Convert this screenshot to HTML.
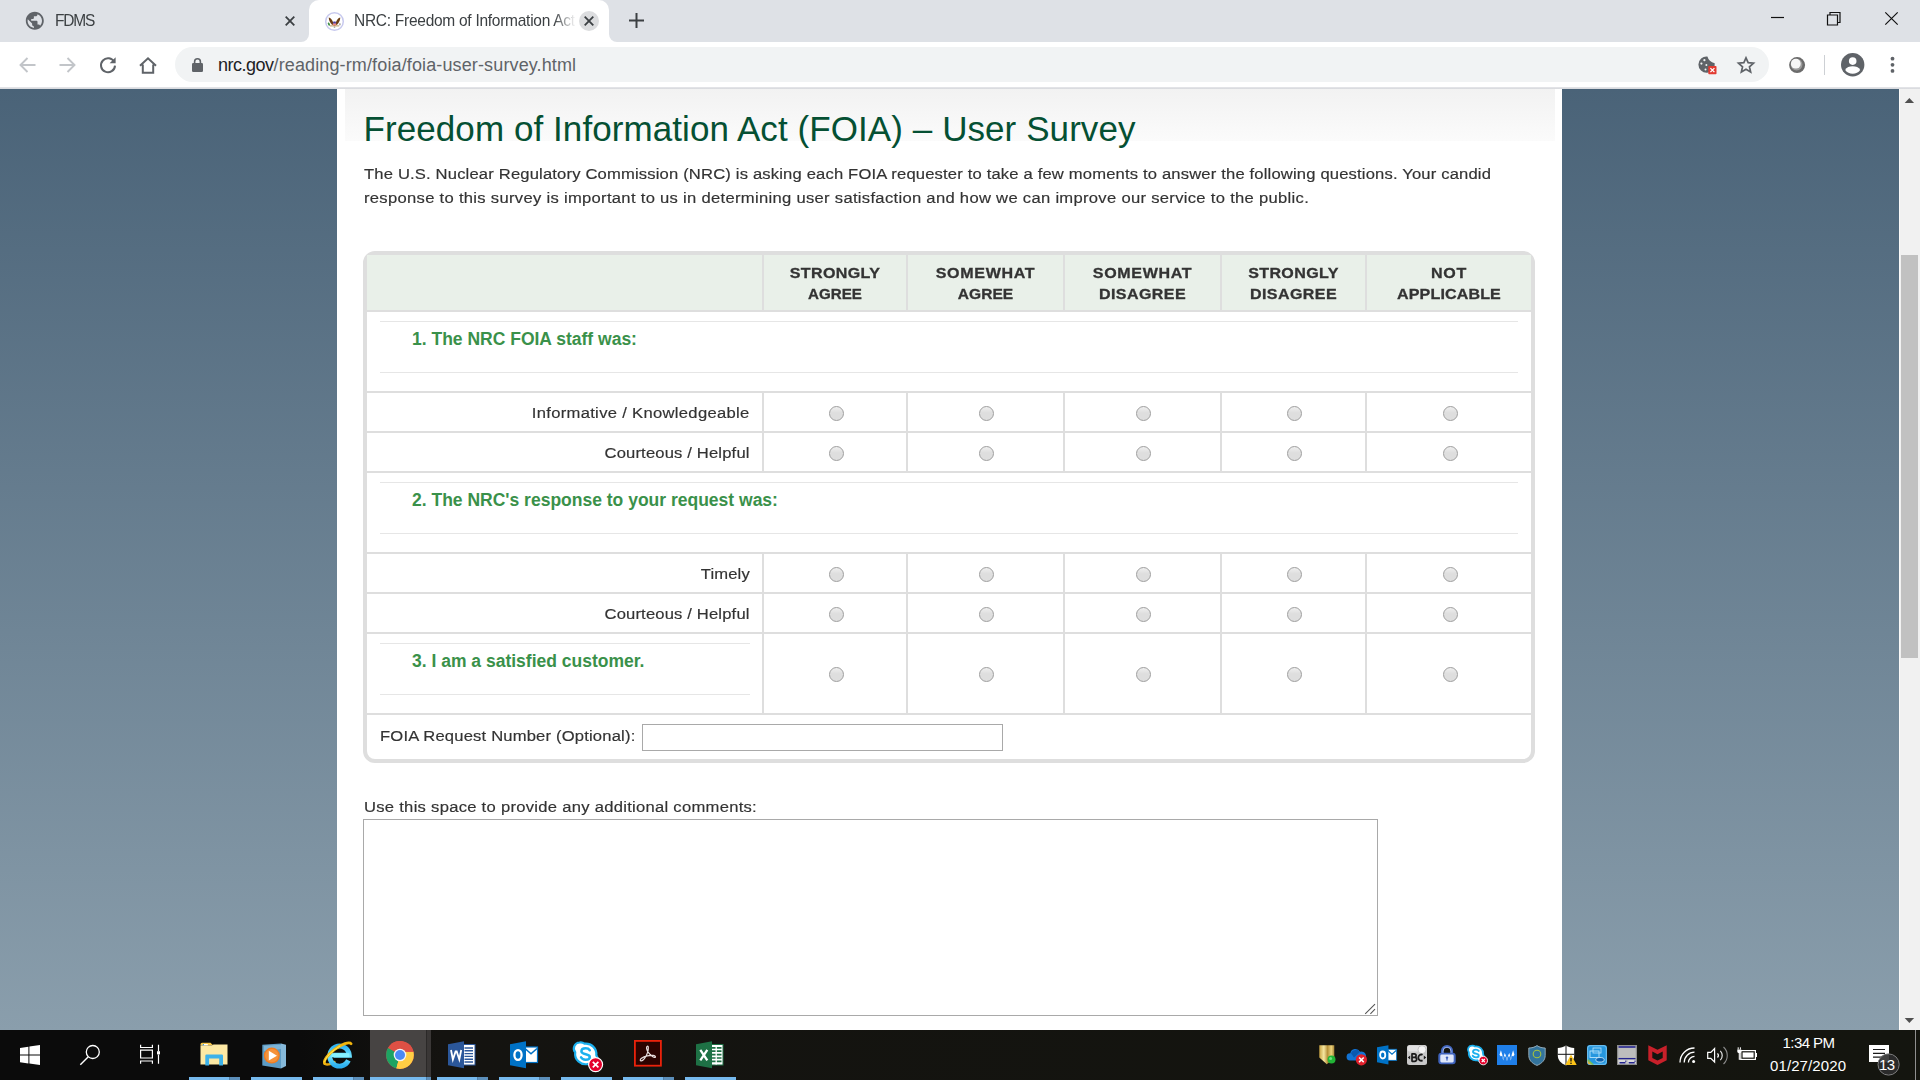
<!DOCTYPE html>
<html>
<head>
<meta charset="utf-8">
<title>NRC: Freedom of Information Act (FOIA) - User Survey</title>
<style>
*{box-sizing:border-box;margin:0;padding:0}
html,body{width:1920px;height:1080px;overflow:hidden;background:#fff;font-family:"Liberation Sans",sans-serif;}
.abs{position:absolute}
#tabbar{position:absolute;left:0;top:0;width:1920px;height:42px;background:#dee1e6}
#toolbar{position:absolute;left:0;top:42px;width:1920px;height:45px;background:#fff}
#tbline{position:absolute;left:0;top:87px;width:1920px;height:2px;background:linear-gradient(#e6e7ea,#d6d8dc)}
#omni{position:absolute;left:175px;top:47px;width:1594px;height:35px;border-radius:18px;background:#f1f3f4}
#page{position:absolute;left:0;top:89px;width:1899px;height:941px;background:linear-gradient(#4a6378,#8a9eac);overflow:hidden}
#panel{position:absolute;left:337px;top:0;width:1225px;height:941px;background:#fff}
#hgrad{position:absolute;left:8px;top:0;width:1210px;height:52px;background:linear-gradient(#f2f2f2,#fbfbfb)}
#sbar{position:absolute;left:1899px;top:89px;width:21px;height:941px;background:#f1f1f1}
#sbar:before{content:"";position:absolute;left:0;top:0;width:1px;height:941px;background:#fbfaf9}
#sthumb{position:absolute;left:2px;top:166px;width:17px;height:403px;background:#c1c1c1}
#taskbar{position:absolute;left:0;top:1030px;width:1920px;height:50px;background:linear-gradient(90deg,#0b0b0b 0,#0b0b0b 300px,#141310 440px,#14150f 100%)}
.t{position:absolute;white-space:nowrap;color:#333;font-size:15.5px;line-height:20px;-webkit-text-stroke:0.18px #333}
h1{position:absolute;left:26.5px;top:20px;letter-spacing:0.08px;font-weight:normal;font-size:35px;line-height:40px;color:#055033;white-space:nowrap}
#tbl{position:absolute;left:26px;top:162px;width:1172px;height:512px;border:4px solid #dedede;border-radius:12px;background:#fff}
.hl{position:absolute;background:#dedede;height:2px;left:0;width:1164px}
.vl{position:absolute;background:#dedede;width:2px}
.thin{position:absolute;background:#e6e6e6;height:1px}
.hd{position:absolute;top:0;height:55px;background:#e9f0e9}
.th{position:absolute;text-align:center;font-weight:bold;font-size:15px;line-height:21px;color:#333;white-space:nowrap;-webkit-text-stroke:0.3px #333}
.q{position:absolute;font-weight:bold;font-size:17.5px;line-height:22px;color:#3a914a;white-space:nowrap}
.r{position:absolute;width:15px;height:15px;border-radius:50%;border:1px solid #9e9e9e;background:linear-gradient(#efefef 0%,#dedede 45%,#dedede 100%)}

.ct{position:absolute;white-space:nowrap;font-size:15.5px;line-height:20px;color:#3c4043;transform:scaleY(1.08);transform-origin:left bottom}
#atab{position:absolute;left:309px;top:0;width:300px;height:42px;background:#fff;border-radius:10px 10px 0 0}
.tc{position:absolute;bottom:0;width:8px;height:8px;background:#fff}
.tc i{position:absolute;display:block;width:16px;height:16px;border-radius:50%;background:#dee1e6;bottom:0}
#url{position:absolute;left:218px;top:53px;font-size:18px;line-height:24px;white-space:nowrap;color:#5f6368;letter-spacing:0.13px}
#url b{font-weight:normal;color:#202124;letter-spacing:-0.5px}
svg{position:absolute;overflow:visible}

.ul{position:absolute;top:47px;height:3px;background:#76b9ed}
.ul i{position:absolute;right:0;top:0;height:3px;width:11px;background:#5c8fba;border-left:1px solid #4f7ea6}
.clk{position:absolute;color:#fff;font-size:15px;line-height:18px;white-space:nowrap}
</style>
</head>
<body>

<div id="tabbar">
 <!-- inactive tab -->
 <svg style="left:24.2px;top:10.2px" width="21.6" height="21.6" viewBox="0 0 24 24"><path fill="#5f6368" d="M12 2C6.48 2 2 6.48 2 12s4.48 10 10 10 10-4.48 10-10S17.52 2 12 2zm-1 17.930c-3.950-.490-7-3.850-7-7.930 0-.620.080-1.210.210-1.790L9 15v1c0 1.100.900 2 2 2v1.930zm6.900-2.540c-.260-.810-1-1.390-1.900-1.390h-1v-3c0-.550-.450-1-1-1H8v-2h2c.550 0 1-.450 1-1V7h2c1.100 0 2-.900 2-2v-.410c2.930 1.190 5 4.060 5 7.410 0 2.080-.800 3.970-2.100 5.390z"/></svg>
 <div class="ct" id="t1" style="left:55px;top:11.4px;letter-spacing:-1.15px">FDMS</div>
 <svg style="left:285px;top:16px" width="10" height="10" viewBox="0 0 10 10"><path d="M0.700 0.700L9.300 9.300M9.300 0.700L0.700 9.300" stroke="#3c4043" stroke-width="1.800" fill="none"/></svg>
 <!-- active tab -->
 <div id="atab"></div>
 <div class="tc" style="left:301px"><i style="right:0"></i></div>
 <div class="tc" style="left:609px"><i style="left:0"></i></div>
 <!-- NRC seal favicon -->
 <svg style="left:325px;top:11.500px" width="19" height="19" viewBox="0 0 19 19">
  <circle cx="9.500" cy="9.500" r="8.800" fill="#fff" stroke="#c7c9ee" stroke-width="1.500"/>
  <path d="M3.700 5.500C5.600 5.800 7.900 8 8.700 12.900L7 12.700C5.100 11 3.900 8.500 3.700 5.500z" fill="#6b3e14"/>
  <path d="M15.300 5.500C13.400 5.800 11.100 8 10.300 12.900L12 12.700C13.900 11 15.100 8.500 15.300 5.500z" fill="#6b3e14"/>
  <path d="M7.900 11.300H11.100V12.600Q11.100 13.700 9.500 14.400 7.900 13.700 7.900 12.600z" fill="#f08884"/>
  <rect x="8.100" y="9.400" width="2.800" height="2.100" rx=".600" fill="#4d3fa3"/>
  <path d="M5 13.900H14.200" stroke="#b08c50" stroke-width=".900"/>
  <ellipse cx="3.900" cy="12.100" rx=".950" ry="1.800" transform="rotate(-25 3.900 12.100)" fill="#3f8f45"/>
  <ellipse cx="14.900" cy="12.200" rx=".700" ry="1.300" fill="#a3a3a3"/>
  <ellipse cx="9.500" cy="15.200" rx=".900" ry=".800" fill="#9db5a6"/>
 </svg>
 <div class="ct" id="t2" style="left:354px;top:11.4px;width:224px;overflow:hidden;letter-spacing:-0.27px;-webkit-mask-image:linear-gradient(90deg,#000 200px,transparent 222px)">NRC: Freedom of Information Act (FOIA)</div>
 <div class="abs" style="left:579px;top:11px;width:20px;height:20px;border-radius:50%;background:#dcdddf"></div>
 <svg style="left:584px;top:16px" width="10" height="10" viewBox="0 0 10 10"><path d="M0.700 0.700L9.300 9.300M9.300 0.700L0.700 9.300" stroke="#3c4043" stroke-width="1.800" fill="none"/></svg>
 <!-- new tab plus -->
 <svg style="left:628.500px;top:13.300px" width="15" height="15" viewBox="0 0 15 15"><path d="M7.500 0v15M0 7.500h15" stroke="#3c4043" stroke-width="2" fill="none"/></svg>
 <!-- window controls -->
 <svg style="left:1771px;top:11px" width="14" height="14" viewBox="0 0 14 14"><path d="M0 6.500h13" stroke="#111" stroke-width="1.200" fill="none"/></svg>
 <svg style="left:1827px;top:12px" width="14" height="14" viewBox="0 0 14 14"><path d="M0.500 3h10v10h-10zM3 3V0.500h10v10h-2.500" stroke="#111" stroke-width="1.200" fill="none"/></svg>
 <svg style="left:1885px;top:12px" width="13" height="13" viewBox="0 0 13 13"><path d="M0.300 0.300L12.700 12.700M12.700 0.300L0.300 12.700" stroke="#111" stroke-width="1.200" fill="none"/></svg>
</div>
<div id="toolbar">
 <!-- back / forward (disabled) -->
 <svg style="left:19px;top:15px" width="17" height="16" viewBox="0 0 17 16"><path d="M16.500 8H2M8.500 1L1.500 8l7 7" stroke="#c2c5c9" stroke-width="1.900" fill="none"/></svg>
 <svg style="left:59px;top:15px" width="17" height="16" viewBox="0 0 17 16"><path d="M0.500 8H15M8.500 1l7 7-7 7" stroke="#c2c5c9" stroke-width="1.900" fill="none"/></svg>
 <!-- reload -->
 <svg style="left:98.500px;top:13.700px" width="18" height="18" viewBox="0 0 18 18"><path d="M15.300 6.200A7 7 0 1 0 16 9.600" stroke="#5f6368" stroke-width="2" fill="none"/><path d="M16.600 1.200v6h-6z" fill="#5f6368"/></svg>
 <!-- home -->
 <svg style="left:138.500px;top:14.500px" width="18" height="17" viewBox="0 0 18 17"><path d="M1 8.800L9 1.300l8 7.500M3.800 7.500V15.800h10.400V7.500" stroke="#5f6368" stroke-width="2" fill="none" stroke-linejoin="miter"/></svg>
</div>
<div id="omni">
 <!-- lock -->
 <svg style="left:17px;top:11px" width="11" height="14" viewBox="0 0 11 14"><rect x="0" y="5" width="11" height="9" rx="1.300" fill="#5f6368"/><path d="M2.600 5.500V3.700a2.900 2.900 0 0 1 5.800 0V5.500" stroke="#5f6368" stroke-width="1.600" fill="none"/></svg>
 <!-- cookie blocked -->
 <svg style="left:1522.500px;top:9px" width="19" height="19" viewBox="0 0 19 19"><path d="M9.400 0.450Q10.800 5.600 16.700 7.300A8.200 8.200 0 1 1 9.400 0.450Z" fill="#5f6368"/><circle cx="6.400" cy="4.200" r="1.100" fill="#f1f3f4"/><circle cx="3.400" cy="7.600" r="1.100" fill="#f1f3f4"/><circle cx="8.400" cy="8.900" r="1" fill="#f1f3f4"/><circle cx="7.500" cy="13.600" r="1" fill="#f1f3f4"/><rect x="10.300" y="10" width="8.200" height="8.200" rx="0.800" fill="#e23b31"/><path d="M12.400 12.100l4 4M16.400 12.100l-4 4" stroke="#fff" stroke-width="1.300"/></svg>
 <!-- star -->
 <svg style="left:1562px;top:8.500px" width="18" height="18" viewBox="0 0 18 18"><path d="M9 1.800l2.150 4.900 5.350.500-4.050 3.550 1.200 5.250L9 13.200 4.350 16l1.200-5.250L1.500 7.200l5.350-.500z" stroke="#5f6368" stroke-width="1.700" fill="none" stroke-linejoin="miter"/></svg>
</div>
<!-- extension ball, separator, avatar, menu -->
<svg style="left:1788.500px;top:56.500px" width="17" height="17" viewBox="0 0 17 17"><circle cx="8.100" cy="8.100" r="8" fill="#6b6b6b"/><circle cx="7.600" cy="7.600" r="5.900" fill="#9c9c9c"/><circle cx="6.800" cy="6.700" r="4.900" fill="#f7f7f7"/></svg>
<div class="abs" style="left:1824px;top:55px;width:1px;height:20px;background:#cdd0d4"></div>
<svg style="left:1840.800px;top:53px" width="23.400" height="23.400" viewBox="0 0 24 24"><circle cx="12" cy="12" r="12" fill="#5f6368"/><circle cx="12" cy="8.300" r="3.900" fill="#fff"/><path d="M4.300 17.500c1.300-3 4.300-3.900 7.700-3.900s6.400.900 7.700 3.900A9.700 9.700 0 0 1 12 21.400a9.700 9.700 0 0 1-7.700-3.900z" fill="#fff"/></svg>
<svg style="left:1890px;top:56px" width="5" height="18" viewBox="0 0 5 18"><circle cx="2.500" cy="2.700" r="1.900" fill="#5f6368"/><circle cx="2.500" cy="8.800" r="1.900" fill="#5f6368"/><circle cx="2.500" cy="14.900" r="1.900" fill="#5f6368"/></svg>
<div id="url"><b>nrc.gov</b>/reading-rm/foia/foia-user-survey.html</div>

<div id="tbline"></div>

<div id="page">
 <div id="panel">
  <div id="hgrad"></div>
  <h1>Freedom of Information Act (FOIA) – User Survey</h1>
  <div class="t" id="p1" style="left:27px;top:74.5px;letter-spacing:0.161px;transform:scaleX(1.0700);transform-origin:left center">The U.S. Nuclear Regulatory Commission (NRC) is asking each FOIA requester to take a few moments to answer the following questions. Your candid</div>
  <div class="t" id="p2" style="left:27px;top:98.5px;letter-spacing:0.284px;transform:scaleX(1.0700);transform-origin:left center">response to this survey is important to us in determining user satisfaction and how we can improve our service to the public.</div>

  <div id="tbl">
   <div class="hd" style="left:0;width:1164px"></div>
   <div class="hl" style="top:55px"></div>
   <div class="hl" style="top:136px"></div>
   <div class="hl" style="top:176px"></div>
   <div class="hl" style="top:216px"></div>
   <div class="hl" style="top:297px"></div>
   <div class="hl" style="top:337px"></div>
   <div class="hl" style="top:377px"></div>
   <div class="hl" style="top:458px"></div>
   <div class="vl" style="left:395px;top:0;height:55px"></div>
   <div class="vl" style="left:395px;top:138px;height:78px"></div>
   <div class="vl" style="left:395px;top:299px;height:159px"></div>
   <div class="vl" style="left:539px;top:0;height:55px"></div>
   <div class="vl" style="left:539px;top:138px;height:78px"></div>
   <div class="vl" style="left:539px;top:299px;height:159px"></div>
   <div class="vl" style="left:696px;top:0;height:55px"></div>
   <div class="vl" style="left:696px;top:138px;height:78px"></div>
   <div class="vl" style="left:696px;top:299px;height:159px"></div>
   <div class="vl" style="left:853px;top:0;height:55px"></div>
   <div class="vl" style="left:853px;top:138px;height:78px"></div>
   <div class="vl" style="left:853px;top:299px;height:159px"></div>
   <div class="vl" style="left:998px;top:0;height:55px"></div>
   <div class="vl" style="left:998px;top:138px;height:78px"></div>
   <div class="vl" style="left:998px;top:299px;height:159px"></div>
   <div class="thin" style="left:13px;top:66px;width:1138px"></div>
   <div class="thin" style="left:13px;top:117px;width:1138px"></div>
   <div class="thin" style="left:13px;top:227px;width:1138px"></div>
   <div class="thin" style="left:13px;top:278px;width:1138px"></div>
   <div class="thin" style="left:13px;top:388px;width:370px"></div>
   <div class="thin" style="left:13px;top:439px;width:370px"></div>
   <div class="th" id="h0a" style="left:397px;width:142px;top:7px;letter-spacing:0.328px;transform:scaleX(1.0700);transform-origin:center center">STRONGLY</div>
   <div class="th" id="h0b" style="left:397px;width:142px;top:28px;letter-spacing:0.000px;transform:scaleX(1.0093);transform-origin:center center">AGREE</div>
   <div class="th" id="h1a" style="left:541px;width:155px;top:7px;letter-spacing:0.619px;transform:scaleX(1.0700);transform-origin:center center">SOMEWHAT</div>
   <div class="th" id="h1b" style="left:541px;width:155px;top:28px;letter-spacing:0.000px;transform:scaleX(1.0358);transform-origin:center center">AGREE</div>
   <div class="th" id="h2a" style="left:698px;width:155px;top:7px;letter-spacing:0.593px;transform:scaleX(1.0700);transform-origin:center center">SOMEWHAT</div>
   <div class="th" id="h2b" style="left:698px;width:155px;top:28px;letter-spacing:0.366px;transform:scaleX(1.0700);transform-origin:center center">DISAGREE</div>
   <div class="th" id="h3a" style="left:855px;width:143px;top:7px;letter-spacing:0.342px;transform:scaleX(1.0700);transform-origin:center center">STRONGLY</div>
   <div class="th" id="h3b" style="left:855px;width:143px;top:28px;letter-spacing:0.393px;transform:scaleX(1.0700);transform-origin:center center">DISAGREE</div>
   <div class="th" id="h4a" style="left:1000px;width:164px;top:7px;letter-spacing:0.668px;transform:scaleX(1.0700);transform-origin:center center">NOT</div>
   <div class="th" id="h4b" style="left:1000px;width:164px;top:28px;letter-spacing:0.123px;transform:scaleX(1.0700);transform-origin:center center">APPLICABLE</div>
   <div class="q" id="q1" style="left:45px;top:73px">1. The NRC FOIA staff was:</div>
   <div class="q" id="q2" style="left:45px;top:234px">2. The NRC's response to your request was:</div>
   <div class="q" id="q3" style="left:45px;top:395px">3. I am a satisfied customer.</div>
   <div class="t" id="l0" style="right:781px;top:148px;letter-spacing:0.297px;transform:scaleX(1.0700);transform-origin:right center">Informative / Knowledgeable</div>
   <div class="t" id="l1" style="right:781px;top:188px;letter-spacing:0.155px;transform:scaleX(1.0700);transform-origin:right center">Courteous / Helpful</div>
   <div class="t" id="l2" style="right:781px;top:309px;letter-spacing:0.140px;transform:scaleX(1.0700);transform-origin:right center">Timely</div>
   <div class="t" id="l3" style="right:781px;top:349px;letter-spacing:0.155px;transform:scaleX(1.0700);transform-origin:right center">Courteous / Helpful</div>
   <div class="r" style="left:462px;top:151px"></div>
   <div class="r" style="left:612px;top:151px"></div>
   <div class="r" style="left:769px;top:151px"></div>
   <div class="r" style="left:920px;top:151px"></div>
   <div class="r" style="left:1076px;top:151px"></div>
   <div class="r" style="left:462px;top:191px"></div>
   <div class="r" style="left:612px;top:191px"></div>
   <div class="r" style="left:769px;top:191px"></div>
   <div class="r" style="left:920px;top:191px"></div>
   <div class="r" style="left:1076px;top:191px"></div>
   <div class="r" style="left:462px;top:312px"></div>
   <div class="r" style="left:612px;top:312px"></div>
   <div class="r" style="left:769px;top:312px"></div>
   <div class="r" style="left:920px;top:312px"></div>
   <div class="r" style="left:1076px;top:312px"></div>
   <div class="r" style="left:462px;top:352px"></div>
   <div class="r" style="left:612px;top:352px"></div>
   <div class="r" style="left:769px;top:352px"></div>
   <div class="r" style="left:920px;top:352px"></div>
   <div class="r" style="left:1076px;top:352px"></div>
   <div class="r" style="left:462px;top:412px"></div>
   <div class="r" style="left:612px;top:412px"></div>
   <div class="r" style="left:769px;top:412px"></div>
   <div class="r" style="left:920px;top:412px"></div>
   <div class="r" style="left:1076px;top:412px"></div>
   <div class="t" id="foia" style="left:13px;top:471.2px;letter-spacing:0.170px;transform:scaleX(1.0700);transform-origin:left center">FOIA Request Number (Optional):</div>
   <div class="abs" style="left:275px;top:469px;width:361px;height:27px;border:1px solid #a9a9a9;background:#fff"></div>
  </div>
  <div class="t" id="use" style="left:27px;top:708px;letter-spacing:0.264px;transform:scaleX(1.0700);transform-origin:left center">Use this space to provide any additional comments:</div>
  <div class="abs" id="ta" style="left:26px;top:730px;width:1015px;height:197px;border:1px solid #a9a9a9;background:#fff"></div>
  <svg style="left:1026px;top:913px" width="14" height="14" viewBox="0 0 14 14"><path d="M2.200 11.800L12 2.200M7.400 11.800L12 7.200" stroke="#555" stroke-width="1.100" fill="none"/></svg>
 </div>
</div>

<div id="sbar"><div id="sthumb"></div>
 <svg style="left:0;top:0" width="21" height="941" viewBox="0 0 21 941"><path d="M5.700 13.900H15.100L10.400 9z" fill="#505050"/><path d="M5.700 929H15.100L10.400 934z" fill="#505050"/></svg>
</div>
<div id="taskbar">
 <!-- chrome active bg -->
 <div class="abs" style="left:370px;top:0;width:61px;height:50px;background:#474443"></div>
 <div class="abs" style="left:426px;top:0;width:5px;height:50px;background:#3a3736;border-left:1px solid #2b2928"></div>
 <!-- underlines -->
 <div class="ul" style="left:189px;width:51px"><i></i></div>
 <div class="ul" style="left:251px;width:51px"></div>
 <div class="ul" style="left:313px;width:51px"><i></i></div>
 <div class="ul" style="left:370px;width:61px"><i style="width:5px"></i></div>
 <div class="ul" style="left:437px;width:51px"><i></i></div>
 <div class="ul" style="left:499px;width:51px"><i></i></div>
 <div class="ul" style="left:561px;width:51px"></div>
 <div class="ul" style="left:623px;width:51px"><i></i></div>
 <div class="ul" style="left:685px;width:51px"></div>
 <!-- start -->
 <svg style="left:20px;top:15px" width="20" height="20" viewBox="0 0 20 20"><path d="M0 2.900L8.400 1.750V9.550H0zM9.400 1.600L20 0v9.550H9.400zM0 10.550h8.400v7.900L0 17.300zM9.400 10.550H20V20L9.400 18.600z" fill="#fff"/></svg>
 <!-- search -->
 <svg style="left:79px;top:14px" width="22" height="22" viewBox="0 0 22 22"><circle cx="13.800" cy="8" r="6.500" stroke="#fff" stroke-width="1.300" fill="none"/><path d="M9.300 12.800L1.300 20.800" stroke="#fff" stroke-width="1.400"/></svg>
 <!-- task view -->
 <svg style="left:139px;top:14px" width="22" height="21" viewBox="0 0 22 21"><path d="M1.600 0.800V3.500H13.400V0.800M1.600 6.200H13.400V14H1.600zM1.600 19.800V17H13.400V19.800M19.500 0.800V7.200M19.500 10.400V19.800" stroke="#fff" stroke-width="1.200" fill="none"/><rect x="18" y="7.200" width="3" height="3.200" fill="#fff"/></svg>
 <!-- file explorer -->
 <svg style="left:200px;top:12px" width="28" height="24" viewBox="0 0 28 24"><path d="M0.500 2.300Q0.500 0.800 2 0.800H10.500L12.800 3H0.500z" fill="#f6c64a"/><path d="M0.500 3.300H12L13.500 2.600H27.500V22.500H0.500z" fill="#fde9a4"/><rect x="2.800" y="2" width="5" height="1.300" fill="#fff"/><rect x="2.800" y="2" width="1.200" height="1.300" fill="#3aa0e0"/><path d="M5.300 13.800Q5.300 12.600 6.500 12.600H21.800Q23 12.600 23 13.800V23.400H19.200V16.600H9.100V23.400H5.300z" fill="#3db2ea"/></svg>
 <!-- media player -->
 <svg style="left:262px;top:13px" width="25" height="26" viewBox="0 0 25 26"><path d="M0.300 1.800L19 0.600V25.400L0.300 22.400z" fill="#5d9bc4"/><path d="M19 0.600L24 1.800V23L19 25.400z" fill="#86b9da"/><path d="M2 2.800L19 1.700V6L2 8z" fill="#8fc0de" opacity=".7"/><circle cx="9.800" cy="12.600" r="8" fill="#f07d22"/><circle cx="9.800" cy="12.600" r="6.700" fill="#f5923a"/><path d="M6.800 7.800L15 12.700 6.800 17.600z" fill="#fff"/></svg>
 <!-- IE -->
 <svg style="left:322px;top:10px" width="34" height="32" viewBox="0 0 34 32"><defs><linearGradient id="ieg" x1="0" y1="0" x2="0" y2="1"><stop offset="0" stop-color="#2fb2f2"/><stop offset=".5" stop-color="#6fe3ff"/><stop offset="1" stop-color="#2cb0f0"/></linearGradient></defs>
  <g transform="rotate(-36.900 15.900 13.650)"><path d="M-0.600 13.650A16.500 5.300 0 0 0 8 18.300" stroke="#e8a90c" stroke-width="2.600" fill="none" stroke-linecap="round"/></g>
  <path d="M26.400 20.400A9.800 10 0 1 1 27.300 15.200H11.500" stroke="url(#ieg)" stroke-width="4.900" fill="none"/>
  <path d="M27.300 15.200H9.500" stroke="#86f0ff" stroke-width="4" fill="none"/>
  <g transform="rotate(-36.900 15.900 13.650)"><path d="M-0.600 13.650A16.500 5.300 0 0 1 32.400 13.650" stroke="#f2b50d" stroke-width="2.800" fill="none" stroke-linecap="round"/><path d="M0.500 12.300A16.500 5.300 0 0 1 22 8.800" stroke="#ffe552" stroke-width="1" fill="none" stroke-linecap="round"/></g>
 </svg>
 <!-- chrome -->
 <svg style="left:385.700px;top:10.800px" width="28" height="28" viewBox="0 0 28 28"><circle cx="14" cy="14" r="13.900" fill="#dd5044"/><path d="M14 14L1.950 7.050A13.900 13.900 0 0 0 10.400 27.430z" fill="#1da362"/><path d="M14 14L10.400 27.430A13.900 13.900 0 0 0 27.500 10.700H14z" fill="#ffce44"/><path d="M14 14L1.950 7.050A13.900 13.900 0 0 1 27.500 10.700H14z" fill="#dd5044"/><path d="M14 14l-5.400 3.200L1.950 7.050z" fill="#1da362"/><path d="M14 14l5.500 3.100L10.400 27.430z" fill="#ffce44"/><circle cx="14" cy="14" r="6.300" fill="#f4f4f4"/><circle cx="14" cy="14" r="5" fill="#4a8af4"/></svg>
 <!-- word -->
 <svg style="left:448px;top:11px" width="28" height="28" viewBox="0 0 28 28"><rect x="14" y="3.500" width="13" height="20.500" fill="#fff" stroke="#2b579a" stroke-width="1"/><path d="M16.500 7h8.500M16.500 9.800h8.500M16.500 12.600h8.500M16.500 15.400h8.500M16.500 18.200h8.500M16.500 21h8.500" stroke="#2b579a" stroke-width="1.400"/><path d="M0 3.200L16 0.300V27.300L0 24.300z" fill="#2b579a"/><path d="M3 9l1.900 9.500L7.600 10.500h1.100L11.300 18.500 13.200 9" stroke="#fff" stroke-width="1.800" fill="none" stroke-linejoin="miter"/></svg>
 <!-- outlook -->
 <svg style="left:510px;top:11px" width="28" height="28" viewBox="0 0 28 28"><rect x="14" y="6" width="13.500" height="15.500" fill="#fff" stroke="#0072c6" stroke-width="1.200"/><path d="M15 7.500l6 5.300 6-5.300" stroke="#0072c6" stroke-width="1.600" fill="none"/><path d="M0 3.200L16 0.300V27.300L0 24.300z" fill="#0072c6"/><ellipse cx="8" cy="14" rx="3.600" ry="4.900" stroke="#fff" stroke-width="2.300" fill="none"/></svg>
 <!-- skype -->
 <svg style="left:571px;top:10px" width="34" height="34" viewBox="0 0 34 34"><path d="M8.500 2.500a6 6 0 0 1 5 1.200 10.500 10.500 0 0 1 11.800 11.500 6.300 6.300 0 0 1-8.500 8.800A10.500 10.500 0 0 1 4.200 12.300 6 6 0 0 1 8.500 2.500z" fill="#fff" stroke="#1cb0ee" stroke-width="2.200"/><path d="M18.800 10.200c-.900-1.300-2.300-1.900-4.200-1.900-2.500 0-4.200 1.200-4.200 3 0 4 8.400 2 8.400 5.600 0 1.700-1.700 2.800-4.200 2.800-2.200 0-3.800-.800-4.600-2.400" stroke="#1cb0ee" stroke-width="2.500" fill="none" stroke-linecap="round"/><circle cx="24.600" cy="24.600" r="7" fill="#e4002b" stroke="#fff" stroke-width="1.200"/><path d="M21.800 21.800l5.600 5.600M27.400 21.800l-5.600 5.600" stroke="#fff" stroke-width="1.700"/></svg>
 <!-- acrobat -->
 <svg style="left:634px;top:10.400px" width="28" height="27" viewBox="0 0 28 27"><rect x="0.900" y="0.900" width="26" height="24.800" fill="#2b0300" stroke="#ea220b" stroke-width="1.800"/><path d="M13.300 6.200c1.200-.400 1.400 2.300.300 6.200-1.200 4.300-5 9.400-7 8.300-1.500-1 1.800-3.800 6.600-4.900 4.600-1 8.600-.300 8.200 1.200-.400 1.400-4.200-.600-6.900-4.400-2.300-3.300-2.400-6-1.200-6.400z" stroke="#e8dede" stroke-width="1.200" fill="none"/></svg>
 <!-- excel -->
 <svg style="left:696px;top:11px" width="28" height="28" viewBox="0 0 28 28"><rect x="14" y="3.500" width="13" height="20.500" fill="#fff" stroke="#1e7145" stroke-width="1"/><path d="M16 6.800h9.500M16 10.200h9.500M16 13.600h9.500M16 17h9.500M16 20.400h9.500" stroke="#1e7145" stroke-width="1.700"/><path d="M20.200 4v19.500" stroke="#fff" stroke-width="1.300"/><path d="M0 3.200L16 0.300V27.300L0 24.300z" fill="#1e7145"/><path d="M4.300 8.800l7 10.500M11.300 8.800l-7 10.500" stroke="#fff" stroke-width="2.300" fill="none"/></svg>
 <!-- tray: gold shield w/ green dot -->
 <svg style="left:1319px;top:15px" width="17" height="20" viewBox="0 0 17 20"><defs><linearGradient id="gd" x1="0" x2="1"><stop offset="0" stop-color="#c9a443"/><stop offset=".3" stop-color="#f6e7a0"/><stop offset=".55" stop-color="#b8923a"/><stop offset=".8" stop-color="#ecd27a"/><stop offset="1" stop-color="#a88435"/></linearGradient></defs><path d="M0.300 0.300H15.300V12.500L7.800 19.300 0.300 12.500z" fill="url(#gd)"/><circle cx="12.500" cy="14.400" r="4" fill="#22b436"/><circle cx="11.600" cy="13.400" r="1.500" fill="#6fe07c"/></svg>
 <!-- onedrive w/ red x -->
 <svg style="left:1346px;top:17px" width="21" height="19" viewBox="0 0 21 19"><path d="M4 13.500a3.600 3.600 0 0 1 .300-7.200A5.200 5.200 0 0 1 14 4.800a4.200 4.200 0 0 1 3 8.700z" fill="#1273d4"/><path d="M5 6.300A5.200 5.200 0 0 1 14 4.800L8 10.500z" fill="#0a58b0"/><circle cx="15.400" cy="12.800" r="5.600" fill="#e0202c"/><path d="M13.100 10.500l4.600 4.600M17.700 10.500l-4.600 4.600" stroke="#fff" stroke-width="1.500"/></svg>
 <!-- outlook small -->
 <svg style="left:1377px;top:15px" width="20" height="20" viewBox="0 0 28 28"><rect x="14" y="6" width="13.500" height="15.500" fill="#fff" stroke="#0072c6" stroke-width="1.200"/><path d="M15 7.500l6 5.300 6-5.300" stroke="#0072c6" stroke-width="1.800" fill="none"/><path d="M0 3.200L16 0.300V27.300L0 24.300z" fill="#0072c6"/><ellipse cx="8" cy="14" rx="3.600" ry="4.900" stroke="#fff" stroke-width="2.500" fill="none"/></svg>
 <!-- BC -->
 <svg style="left:1407px;top:15px" width="20" height="20" viewBox="0 0 20 20"><rect x="0" y="0" width="20" height="20" rx="2.500" fill="#c9c9c9"/><rect x="0.500" y="0.500" width="19" height="6" rx="2" fill="#e2e2e2"/><circle cx="15" cy="4.700" r="4" fill="#f3f3f3" stroke="#aaa" stroke-width=".6"/><path d="M0.800 12.500l2.400-2v4zM19.200 12.500l-2.400-2v4z" fill="#1a1a1a"/><path d="M5 8.300V16.700M5 8.800h2.300a1.700 1.700 0 0 1 0 3.600H5h2.700a1.900 1.900 0 0 1 0 3.900H5" stroke="#1a1a1a" stroke-width="1.700" fill="none"/><path d="M15.600 9.800a3 3 0 0 0-4.300 2.700 3 3 0 0 0 4.300 2.900" stroke="#1a1a1a" stroke-width="1.800" fill="none"/></svg>
 <!-- blue lock -->
 <svg style="left:1438px;top:15px" width="18" height="20" viewBox="0 0 18 20"><path d="M4.200 8.500V6a4.800 4.800 0 0 1 9.600 0V8.500" stroke="#4469c2" stroke-width="2.600" fill="none"/><path d="M5 8.500V6.200a4 4 0 0 1 8 0V8.500" stroke="#a9bdf0" stroke-width=".9" fill="none"/><rect x="0.300" y="7.800" width="17.400" height="11.500" rx="3" fill="#3f63bd"/><rect x="2.300" y="9.600" width="13.400" height="7.800" rx="1.300" fill="#dfe7fa"/><circle cx="9" cy="12.600" r="1.200" fill="#3f63bd"/><rect x="8.400" y="12.600" width="1.200" height="3" fill="#3f63bd"/></svg>
 <!-- skype small -->
 <svg style="left:1466px;top:14px" width="23" height="23" viewBox="0 0 34 34"><path d="M8.500 2.500a6 6 0 0 1 5 1.200 10.500 10.500 0 0 1 11.800 11.500 6.300 6.300 0 0 1-8.500 8.800A10.500 10.500 0 0 1 4.200 12.300 6 6 0 0 1 8.500 2.500z" fill="#fff" stroke="#1cb0ee" stroke-width="2.600"/><path d="M18.800 10.200c-.900-1.300-2.300-1.900-4.200-1.900-2.500 0-4.200 1.200-4.200 3 0 4 8.400 2 8.400 5.600 0 1.700-1.700 2.800-4.200 2.800-2.200 0-3.800-.800-4.600-2.400" stroke="#1cb0ee" stroke-width="2.800" fill="none" stroke-linecap="round"/><circle cx="25.500" cy="24.500" r="6.300" fill="#e4002b" stroke="#fff" stroke-width="1.300"/><path d="M23.200 22.200l4.600 4.600M27.800 22.200l-4.600 4.600" stroke="#fff" stroke-width="1.900"/></svg>
 <!-- waves blue square -->
 <svg style="left:1497px;top:15px" width="20" height="20" viewBox="0 0 20 20"><rect width="20" height="20" fill="#1f7fe9"/><path d="M2.500 9.800L3.900 5.200 5.300 9.800 6.200 14.800 7.600 8 8.600 9.800 10 15 11.400 9.800 12.400 8 13.800 14.800 14.700 9.800 16.100 5.200 17.500 9.800 16.100 11.500 14.900 10.800 13.800 15.600 12.400 11 11.400 11.500 10 16 8.600 11.500 7.600 11 6.200 15.600 5.100 10.800 3.900 11.500z" fill="#fff"/></svg>
 <!-- teal shield w ring -->
 <svg style="left:1528px;top:15px" width="18" height="21" viewBox="0 0 18 21"><path d="M9 0.600C6.500 2.300 3.800 3 0.800 3V10.500C0.800 15 4 18.500 9 20.400 14 18.500 17.200 15 17.200 10.500V3C14.200 3 11.500 2.300 9 0.600z" fill="#33749d" stroke="#9fb3bf" stroke-width=".9"/><circle cx="9" cy="9" r="3.800" fill="none" stroke="#a6c53b" stroke-width="1.100"/></svg>
 <!-- defender white shield w/ warning -->
 <svg style="left:1557px;top:15px" width="20" height="21" viewBox="0 0 20 21"><path d="M9 0.600C6.500 2.300 3.800 3 0.800 3V10.500C0.800 15 4 18.500 9 20.400 14 18.500 17.200 15 17.200 10.500V3C14.200 3 11.500 2.300 9 0.600z" fill="#fff"/><path d="M9 0.600V20.400M0.800 9.300H17.200" stroke="#111" stroke-width="1"/><path d="M14 9.500L19.700 20H8.300z" fill="#fcc419"/><path d="M14 13v3.600" stroke="#111" stroke-width="1.300"/><circle cx="14" cy="18.300" r=".8" fill="#111"/></svg>
 <!-- intel blue -->
 <svg style="left:1587px;top:15px" width="20" height="20" viewBox="0 0 20 20"><rect width="20" height="20" rx="2.800" fill="#2697df"/><rect x="0.700" y="0.700" width="18.600" height="18.600" rx="2.300" fill="none" stroke="#8fd0f5" stroke-width=".8"/><rect x="3" y="6" width="9" height="6.500" fill="none" stroke="#b9e4fb" stroke-width=".9"/><rect x="6" y="3" width="8" height="5" fill="none" stroke="#b9e4fb" stroke-width=".8"/><ellipse cx="13" cy="14.800" rx="4.200" ry="2.300" fill="#0d62ae" stroke="#d7f0fd" stroke-width=".8"/><path d="M0.500 15.500l4.500 4H2.800A2.300 2.300 0 0 1 0.500 17.300z" fill="#e8b23c"/><path d="M1 14l6 5.700H5L0.500 15.500z" fill="#7bc24a"/></svg>
 <!-- touchpad -->
 <svg style="left:1617px;top:15px" width="20" height="20" viewBox="0 0 20 20"><rect width="20" height="20" fill="#bdbdbd"/><rect x="0.600" y="0.600" width="18.800" height="18.800" fill="none" stroke="#8e8e8e" stroke-width="1.200"/><path d="M1.500 2H18.500" stroke="#23238e" stroke-width="1.600"/><path d="M1.500 13.600H18.500" stroke="#23238e" stroke-width="1.300"/><rect x="1.300" y="15" width="8" height="3.800" fill="#d9d9d9"/><rect x="10.700" y="15" width="8" height="3.800" fill="#d9d9d9"/><path d="M2.500 17.800H8.500M11.700 17.800H17.700" stroke="#23238e" stroke-width="1.600"/><path d="M8.800 15.500V17M18 15.500V17" stroke="#23238e" stroke-width="1"/></svg>
 <!-- mcafee -->
 <svg style="left:1647.500px;top:15px" width="19" height="20" viewBox="0 0 19 20"><path d="M0.300 0.200L9.500 4.800 18.700 0.200V15.300L9.500 19.900 0.300 15.300zM4.300 6.500V13L9.500 15.600 14.700 13V6.500L9.500 9.200z" fill="#c8202a" fill-rule="evenodd"/></svg>
 <!-- wifi -->
 <svg style="left:1679px;top:17px" width="18" height="16" viewBox="0 0 18 16"><path d="M1 15.500A14.500 14.500 0 0 1 15.500 1" stroke="#fff" stroke-width="1.300" fill="none"/><path d="M5.200 15.500A10.300 10.300 0 0 1 15.500 5.200" stroke="#fff" stroke-width="1.300" fill="none"/><path d="M9.400 15.500A6.100 6.100 0 0 1 15.500 9.400" stroke="#fff" stroke-width="1.300" fill="none"/><circle cx="14.600" cy="14.400" r="1.500" fill="#fff"/></svg>
 <!-- volume -->
 <svg style="left:1706.500px;top:15.500px" width="21" height="19" viewBox="0 0 21 19"><path d="M0.700 6.300H3.800L7.600 2.500V16L3.800 12.300H0.700z" stroke="#fff" stroke-width="1.200" fill="none" stroke-linejoin="miter"/><path d="M10.500 7.300a3.200 3.200 0 0 1 0 4.200" stroke="#fff" stroke-width="1.200" fill="none"/><path d="M13.300 4.800a6.700 6.700 0 0 1 0 9.400" stroke="#e4e4e4" stroke-width="1.200" fill="none"/><path d="M16.500 1a11.500 11.500 0 0 1 0 17" stroke="#8c8c8c" stroke-width="1.100" fill="none"/></svg>
 <!-- battery plugged -->
 <svg style="left:1737px;top:17px" width="20" height="15" viewBox="0 0 20 15"><rect x="3.800" y="3.600" width="14.600" height="8.800" stroke="#fff" stroke-width="1.200" fill="none"/><rect x="5.600" y="5.400" width="11" height="5.200" fill="#fff"/><rect x="18.800" y="6" width="1.200" height="4" fill="#fff"/><path d="M1.200 0.300V2.500M3.400 0.300V2.500" stroke="#fff" stroke-width="1"/><path d="M0.300 2.600H4.300V4.800Q4.300 6.200 2.300 6.200T0.300 4.800z" fill="#fff"/><path d="M2.300 6V12.300H3.800" stroke="#fff" stroke-width="1.100" fill="none"/></svg>
 <!-- clock -->
 <div class="clk" id="ck1" style="left:1782.500px;top:4.200px;letter-spacing:-0.55px">1:34 PM</div>
 <div class="clk" id="ck2" style="left:1770px;top:27.200px;letter-spacing:0.1px">01/27/2020</div>
 <!-- notifications -->
 <svg style="left:1869px;top:15px" width="32" height="32" viewBox="0 0 32 32"><path d="M0 0H20V17H17L20 21V17" fill="#fff"/><rect width="20" height="17" fill="#fff"/><path d="M4 4.500H16M4 8.300H16M4 12.100H16" stroke="#1a1a1a" stroke-width="1.200"/><circle cx="19.600" cy="19.500" r="10.600" fill="#2b2b2b" stroke="#7d7d7d" stroke-width="1"/><path d="M11.200 12.500A10.600 10.600 0 0 1 20 8.900V17.200H11.200z" fill="#555" opacity=".55"/></svg>
 <div class="clk" id="nb" style="left:1879px;top:25.500px;letter-spacing:-0.5px">13</div>
 <div class="abs" style="left:1914.500px;top:0;width:1px;height:50px;background:#8f8f8f"></div>
</div>
</body>
</html>
